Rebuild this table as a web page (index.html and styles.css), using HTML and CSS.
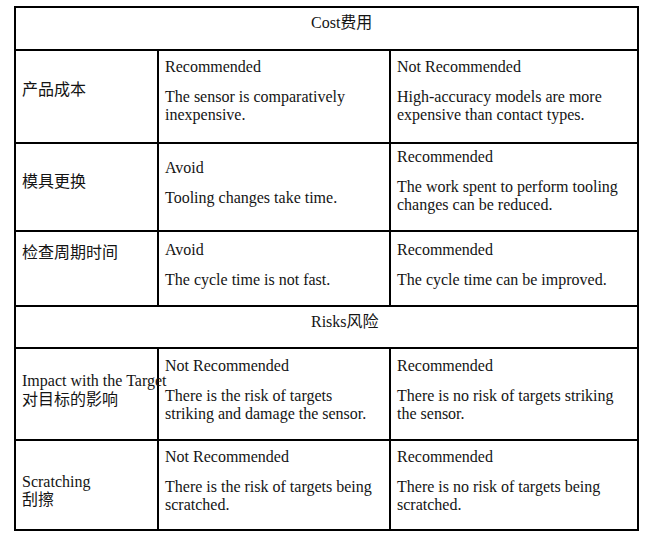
FILE: index.html
```html
<!DOCTYPE html>
<html lang="en">
<head>
<meta charset="utf-8">
<title>Cost and Risks</title>
<link rel="stylesheet" href="styles.css">
</head>
<body>
<div class="table">
  <div class="cell head head-cost"><p>Cost费用</p></div>

  <div class="cell label r1-label"><p>产品成本</p></div>
  <div class="cell r1"><p>Recommended</p><p>The sensor is comparatively<br>inexpensive.</p></div>
  <div class="cell r1"><p>Not Recommended</p><p>High-accuracy models are more<br>expensive than contact types.</p></div>

  <div class="cell label r2-label"><p>模具更换</p></div>
  <div class="cell r2-mid"><p>Avoid</p><p>Tooling changes take time.</p></div>
  <div class="cell r2-right"><p>Recommended</p><p>The work spent to perform tooling<br>changes can be reduced.</p></div>

  <div class="cell label r3-label"><p>检查周期时间</p></div>
  <div class="cell r3"><p>Avoid</p><p>The cycle time is not fast.</p></div>
  <div class="cell r3"><p>Recommended</p><p>The cycle time can be improved.</p></div>

  <div class="cell head head-risks"><p>Risks风险</p></div>

  <div class="cell label r5-label"><p>Impact with the Target<br>对目标的影响</p></div>
  <div class="cell r5"><p>Not Recommended</p><p>There is the risk of targets<br>striking and damage the sensor.</p></div>
  <div class="cell r5"><p>Recommended</p><p>There is no risk of targets striking<br>the sensor.</p></div>

  <div class="cell label r6-label"><p>Scratching<br>刮擦</p></div>
  <div class="cell r6"><p>Not Recommended</p><p>There is the risk of targets being<br>scratched.</p></div>
  <div class="cell r6"><p>Recommended</p><p>There is no risk of targets being<br>scratched.</p></div>
</div>
</body>
</html>
```

FILE: styles.css
```css
html, body {
  margin: 0;
  padding: 0;
  background: #ffffff;
}

body {
  padding: 6px 0 0 14px;
  font-family: "Liberation Serif", "Noto Sans CJK SC", serif;
  font-size: 16px;
  line-height: 18.5px;
  color: #141414;
}

.table {
  display: grid;
  grid-template-columns: 141px 230px 246px;
  grid-template-rows: 41px 91px 86px 73px 40px 90px 88px;
  gap: 2px;
  padding: 2px;
  width: 621px;
  background: #000000;
}

.cell {
  background: #ffffff;
  padding-left: 6px;
  padding-right: 2px;
  white-space: nowrap;
  overflow: visible;
}

.cell p {
  margin: 0;
}

.cell p + p {
  margin-top: 11.5px;
}

/* label text may run past its column, over the next cell */
.label {
  z-index: 1;
}

.head {
  grid-column: 1 / span 3;
  padding-left: 295px;
}

.head-cost { padding-top: 6px; }
.head-risks { padding-top: 5.5px; }

.r1-label { padding-top: 30px; }
.r1 { padding-top: 6.5px; }

.r2-label { padding-top: 28.5px; }
.r2-mid { padding-top: 14.5px; }
.r2-right { padding-top: 3.5px; }

.r3-label { padding-top: 12px; }
.r3 { padding-top: 8.5px; }

.r5-label { padding-top: 23px; }
.r5 { padding-top: 7.5px; }

.r6-label { padding-top: 31.5px; }
.r6 { padding-top: 6.5px; }
```
